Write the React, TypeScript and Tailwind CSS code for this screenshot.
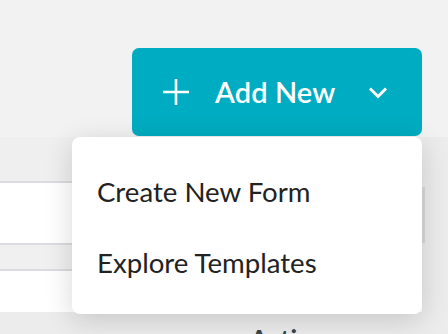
export default function App() {
  return (
    <div
      className="relative w-[448px] h-[334px] overflow-hidden bg-[#f2f2f2] flex flex-col"
      style={{ fontFamily: "Lato, 'Open Sans', sans-serif" }}
    >
      {/* top bar with the add button */}
      <div className="h-[137px] shrink-0 flex justify-end items-start pt-[48px] pr-[26px]">
        <button className="w-[290px] h-[88px] rounded-[7px] bg-[#00acc1] text-white flex items-center pl-[31px] pr-[34px]">
          <svg width="26" height="26" viewBox="0 0 26 26" fill="none" stroke="currentColor" strokeWidth="2.6">
            <path d="M13 0v26M0 13h26" />
          </svg>
          <span className="ml-[26px] text-[29px] font-semibold tracking-[0.1px]">Add New</span>
          <svg width="20" height="13" viewBox="0 0 20 13" fill="none" stroke="currentColor" strokeWidth="3" className="ml-auto">
            <path d="M2 2.5l8 8 8-8" />
          </svg>
        </button>
      </div>

      {/* table behind the menu */}
      <div className="flex flex-1">
        <div className="flex-1 flex flex-col">
          <div className="h-[46px] bg-[#efeff0] border-b-2 border-[#dcdce0]" />
          <div className="h-[62px] bg-white border-b-2 border-[#dcdce0]" />
          <div className="h-[26px] bg-[#f0f0f1] border-b-2 border-[#dcdce0]" />
          <div className="h-[41px] bg-white" />
          <div className="flex-1 bg-[#ececec] pl-[250px] pt-[14px]">
            <span className="text-[26px] font-bold text-[#37474f] leading-none">Actions</span>
          </div>
        </div>
        <div className="w-[26px] bg-[#ececec] flex flex-col">
          <div className="mt-[50px] h-[56px] w-[3px] bg-[#dadada]" />
        </div>
      </div>

      {/* dropdown menu */}
      <div className="absolute left-[72px] top-[137px] w-[350px] h-[177px] rounded-[8px] bg-white shadow-[0_6px_28px_rgba(0,0,0,0.16)] pl-[25px] pt-[37px] flex flex-col gap-[35px] text-[27.6px] text-[#222] leading-[36px]">
        <div>Create New Form</div>
        <div>Explore Templates</div>
      </div>
    </div>
  );
}
